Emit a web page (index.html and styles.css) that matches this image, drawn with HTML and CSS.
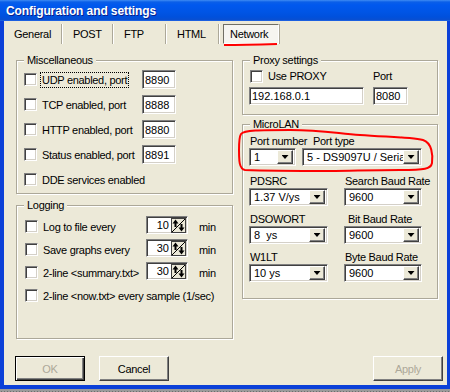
FILE: index.html
```html
<!DOCTYPE html>
<html lang="en">
  <head>
    <meta charset="UTF-8" />
    <meta name="viewport" content="width=device-width, initial-scale=1.0" />
    <title>Configuration and settings</title>
    <link rel="stylesheet" href="styles.css">
  </head>
  <body>
    <div class="window">
      <div class="titlebar">Configuration and settings</div>
      <div class="frame">
        <div class="tabs">
          <div class="tab">General</div>
          <div class="tab">POST</div>
          <div class="tab">FTP</div>
          <div class="tab">HTML</div>
          <div class="tab active">Network</div>
        </div>

        <div class="panel">
          <div class="column left">
            <fieldset class="group misc">
              <legend>Miscellaneous</legend>
              <div class="port-row">
                <input type="checkbox" class="check" />
                <span class="label"><span class="focus">UDP enabled, port</span></span>
                <input type="text" class="edit" value="8890" />
              </div>
              <div class="port-row">
                <input type="checkbox" class="check" />
                <span class="label">TCP enabled, port</span>
                <input type="text" class="edit" value="8888" />
              </div>
              <div class="port-row">
                <input type="checkbox" class="check" />
                <span class="label">HTTP enabled, port</span>
                <input type="text" class="edit" value="8880" />
              </div>
              <div class="port-row">
                <input type="checkbox" class="check" />
                <span class="label">Status enabled, port</span>
                <input type="text" class="edit" value="8891" />
              </div>
              <div class="port-row">
                <input type="checkbox" class="check" />
                <span class="label">DDE services enabled</span>
              </div>
            </fieldset>

            <fieldset class="group logging">
              <legend>Logging</legend>
              <div class="log-row">
                <input type="checkbox" class="check" />
                <span class="label">Log to file every</span>
                <span class="spin">
                  <span class="value">10</span>
                  <svg class="updown" width="15" height="15" viewBox="0 0 15 15">
                    <rect x="0.5" y="0.5" width="14" height="14" fill="#ece9d8" stroke="#404040" />
                    <line x1="14" y1="1" x2="1" y2="14" stroke="#000" />
                    <path d="M4.5 1.5 L1.5 5.5 H3.5 V9 H5.5 V5.5 H7.5 Z" fill="#000" />
                    <path d="M10.5 13.5 L7.5 9.5 H9.5 V6 H11.5 V9.5 H13.5 Z" fill="#000" />
                  </svg>
                </span>
                <span class="unit">min</span>
              </div>
              <div class="log-row">
                <input type="checkbox" class="check" />
                <span class="label">Save graphs every</span>
                <span class="spin">
                  <span class="value">30</span>
                  <svg class="updown" width="15" height="15" viewBox="0 0 15 15">
                    <rect x="0.5" y="0.5" width="14" height="14" fill="#ece9d8" stroke="#404040" />
                    <line x1="14" y1="1" x2="1" y2="14" stroke="#000" />
                    <path d="M4.5 1.5 L1.5 5.5 H3.5 V9 H5.5 V5.5 H7.5 Z" fill="#000" />
                    <path d="M10.5 13.5 L7.5 9.5 H9.5 V6 H11.5 V9.5 H13.5 Z" fill="#000" />
                  </svg>
                </span>
                <span class="unit">min</span>
              </div>
              <div class="log-row">
                <input type="checkbox" class="check" />
                <span class="label">2-line &lt;summary.txt&gt;</span>
                <span class="spin">
                  <span class="value">30</span>
                  <svg class="updown" width="15" height="15" viewBox="0 0 15 15">
                    <rect x="0.5" y="0.5" width="14" height="14" fill="#ece9d8" stroke="#404040" />
                    <line x1="14" y1="1" x2="1" y2="14" stroke="#000" />
                    <path d="M4.5 1.5 L1.5 5.5 H3.5 V9 H5.5 V5.5 H7.5 Z" fill="#000" />
                    <path d="M10.5 13.5 L7.5 9.5 H9.5 V6 H11.5 V9.5 H13.5 Z" fill="#000" />
                  </svg>
                </span>
                <span class="unit">min</span>
              </div>
              <div class="log-row">
                <input type="checkbox" class="check" />
                <span class="label wide">2-line &lt;now.txt&gt; every sample (1/sec)</span>
              </div>
            </fieldset>
          </div>

          <div class="column right">
            <fieldset class="group proxy">
              <legend>Proxy settings</legend>
              <div class="proxy-grid">
                <label class="proxy-check">
                  <input type="checkbox" class="check" />
                  <span>Use PROXY</span>
                </label>
                <span class="proxy-port">Port</span>
                <input type="text" class="edit" value="192.168.0.1" />
                <input type="text" class="edit" value="8080" />
              </div>
            </fieldset>

            <fieldset class="group microlan">
              <legend>MicroLAN</legend>
              <div class="port-grid">
                <div class="field">
                  <span class="field-label">Port number</span>
                  <div class="combo"><span class="text">1</span><span class="drop"></span></div>
                </div>
                <div class="field">
                  <span class="field-label indent">Port type</span>
                  <div class="combo"><span class="text">5 - DS9097U / Serial</span><span class="drop"></span></div>
                </div>
              </div>
              <div class="param-grid">
                <div class="field">
                  <span class="field-label">PDSRC</span>
                  <div class="combo"><span class="text">1.37 V/ys</span><span class="drop"></span></div>
                </div>
                <div class="field">
                  <span class="field-label">Search Baud Rate</span>
                  <div class="combo"><span class="text">9600</span><span class="drop"></span></div>
                </div>
                <div class="field">
                  <span class="field-label">DSOWORT</span>
                  <div class="combo"><span class="text">8&nbsp; ys</span><span class="drop"></span></div>
                </div>
                <div class="field">
                  <span class="field-label nudge">Bit Baud Rate</span>
                  <div class="combo"><span class="text">9600</span><span class="drop"></span></div>
                </div>
                <div class="field">
                  <span class="field-label">W1LT</span>
                  <div class="combo"><span class="text">10 ys</span><span class="drop"></span></div>
                </div>
                <div class="field">
                  <span class="field-label">Byte Baud Rate</span>
                  <div class="combo"><span class="text">9600</span><span class="drop"></span></div>
                </div>
              </div>
            </fieldset>
          </div>
        </div>

        <div class="buttons">
          <button class="default" disabled>OK</button>
          <button class="cancel">Cancel</button>
          <button class="apply" disabled>Apply</button>
        </div>
      </div>

      <!-- red hand-drawn marks on top of the dialog -->
      <svg class="marks" width="450" height="389" viewBox="0 0 450 389">
        <path d="M224 45 C240 45 260 44.5 277 44" fill="none" stroke="#f00" stroke-width="2" />
        <path d="M241 134 C244 130 260 130 290 130 C320 130 335 133 360 135 C385 137 410 137 423 140 C432 143 433 155 432 163 C431 169 425 170 400 170 C370 170 350 171 330 171 C300 171 270 171 245 170 C239 169 239 160 239 150 C239 142 239 137 241 134 Z" fill="none" stroke="#f00" stroke-width="2" />
      </svg>
    </div>
  </body>
</html>
```

FILE: styles.css
```css
body {
  margin: 0;
  font-family: "Liberation Sans", Arial, sans-serif;
  font-size: 11px;
  letter-spacing: -0.3px;
  color: #000;
  background-color: #9a9a9a;
  background-image: radial-gradient(circle, #6e6e6e 0.7px, transparent 0.9px);
  background-size: 3px 3px;
}
.window {
  position: relative;
  width: 450px;
  height: 389px;
}
.titlebar {
  height: 21px;
  box-sizing: border-box;
  padding: 2px 0 0 6px;
  line-height: 19px;
  font-size: 12px;
  font-weight: bold;
  letter-spacing: -0.1px;
  color: #fff;
  text-shadow: 1px 1px 0 #0a1e8c;
  background: linear-gradient(to bottom, #3f8cf3 0, #0a5fe8 2px, #0058ee 5px, #0055e5 12px, #0050dc 17px, #0a4fd0 20px, #2a6ff0 21px);
}
.frame {
  height: 368px;
  box-sizing: border-box;
  border-left: 4px solid #0b40d8;
  border-right: 3px solid #0b40d8;
  border-bottom: 4px solid #0b40d8;
  background-color: #ece9d8;
}

/* tab strip */
.tabs {
  display: flex;
  height: 24px;
  box-sizing: border-box;
  padding-top: 3px;
}
.tab {
  height: 20px;
  box-sizing: border-box;
  padding: 4px 0 0 11px;
  line-height: 13px;
  border-right: 1px solid #aca899;
  box-shadow: 1px 0 0 #fff;
}
.tab:nth-child(1) {
  width: 58px;
  padding-left: 10px;
}
.tab:nth-child(2) {
  width: 51px;
}
.tab:nth-child(3),
.tab:nth-child(4) {
  width: 53px;
}
.tab.active {
  width: 56px;
  margin-left: 4px;
  padding: 3px 0 0 6px;
  border: 1px solid;
  border-color: #716f64 #fff #fff #716f64;
  background-color: #f6f5f0;
  box-shadow: 1px 0 0 #aca899;
}

/* page body */
.panel {
  display: flex;
  gap: 9px;
  padding: 9px 0 0 12px;
}
.column {
  display: flex;
  flex-direction: column;
}
.column.left {
  width: 217px;
  gap: 5px;
}
.column.right {
  width: 196px;
  gap: 3px;
}
.group {
  margin: 0;
  min-width: 0;
  box-sizing: border-box;
  border: 1px solid #aca899;
  box-shadow: inset 1px 1px 0 #fff, 1px 1px 0 #fff;
}
.group legend {
  padding: 0 3px;
  line-height: 13px;
  background-color: #ece9d8;
}
.misc,
.logging {
  height: 140px;
  padding: 0 7px;
}
.misc {
  padding-top: 3px;
}
.logging {
  padding-top: 4px;
}
.proxy {
  height: 61px;
  padding: 0 6px;
}
.microlan {
  height: 181px;
  padding: 4px 6px 0;
}
.proxy legend,
.microlan legend {
  margin-left: 1px;
}

/* classic sunken controls */
.check,
.edit,
.spin,
.combo {
  box-sizing: border-box;
  border: 1px solid;
  border-color: #808080 #fff #fff #808080;
  box-shadow: inset 1px 1px 0 #404040, inset -1px -1px 0 #d4d0c8;
  background-color: #fff;
}
.edit,
.spin,
.combo {
  letter-spacing: 0;
}
.check {
  appearance: none;
  flex: none;
  width: 13px;
  height: 13px;
  margin: 0 5px 0 0;
}
.edit {
  width: 34px;
  height: 19px;
  margin: 0;
  padding: 0 2px;
  font: inherit;
  color: #000;
  outline: none;
}

.port-row {
  display: flex;
  align-items: center;
  height: 19px;
}
.port-row + .port-row {
  margin-top: 6px;
}
.port-row .label {
  width: 100px;
  white-space: nowrap;
}
.focus {
  outline: 1px dotted #000;
  outline-offset: 1px;
}

.log-row {
  display: flex;
  align-items: flex-end;
  height: 18px;
}
.log-row + .log-row {
  margin-top: 5px;
}
.log-row .check {
  margin: 0 5px 1px 1px;
}
.log-row .label {
  width: 103px;
  line-height: 13px;
  white-space: nowrap;
}
.log-row .label.wide {
  width: auto;
}
.spin {
  display: flex;
  align-items: center;
  justify-content: flex-end;
  width: 42px;
  height: 18px;
  padding-right: 1px;
}
.spin .value {
  margin-right: 2px;
}
.updown {
  display: block;
}
.unit {
  margin-left: 11px;
  line-height: 13px;
}

/* proxy */
.proxy-grid {
  display: grid;
  grid-template-columns: 115px 35px;
  grid-template-rows: 20px 18px;
  column-gap: 9px;
}
.proxy-grid .edit {
  width: auto;
  height: 18px;
}
.proxy-check {
  display: flex;
  align-items: center;
  align-self: start;
  padding: 3px 0 0 1px;
  line-height: 13px;
}
.proxy-port {
  padding-top: 3px;
  line-height: 13px;
}

/* microlan */
.port-grid {
  display: grid;
  grid-template-columns: 47px 120px;
  column-gap: 6px;
}
.param-grid {
  display: grid;
  grid-template-columns: 79px 78px;
  column-gap: 16px;
  row-gap: 7px;
  margin-top: 9px;
}
.field {
  display: flex;
  flex-direction: column;
}
.field-label {
  line-height: 13px;
  white-space: nowrap;
  margin-left: 1px;
}
.field-label.indent {
  margin-left: 11px;
}
.field-label.nudge {
  margin-left: 4px;
}
.combo {
  display: flex;
  align-items: center;
  height: 18px;
  padding: 0 2px 0 4px;
}
.combo .text {
  flex: 1;
  min-width: 0;
  overflow: hidden;
  white-space: nowrap;
}
.drop {
  display: flex;
  align-items: center;
  justify-content: center;
  flex: none;
  width: 16px;
  height: 14px;
  box-sizing: border-box;
  border: 1px solid;
  border-color: #fff #404040 #404040 #fff;
  box-shadow: inset -1px -1px 0 #808080;
  background-color: #ece9d8;
}
.drop::after {
  content: "";
  width: 7px;
  height: 4px;
  background-color: #000;
  clip-path: polygon(0 0, 100% 0, 50% 100%);
}

/* dialog buttons */
.buttons {
  display: flex;
  margin-top: 17px;
  padding: 0 4px 0 11px;
}
.buttons button {
  width: 70px;
  height: 25px;
  box-sizing: border-box;
  font: inherit;
  letter-spacing: inherit;
  color: #000;
  border: 1px solid;
  border-color: #fff #404040 #404040 #fff;
  box-shadow: inset -1px -1px 0 #808080;
  background-color: #ece9d8;
}
.buttons button:disabled {
  color: #aca899;
}
.buttons .default {
  border-color: #000;
  box-shadow: inset 1px 1px 0 #fff, inset -1px -1px 0 #404040, inset -2px -2px 0 #808080;
}
.buttons .cancel {
  margin-left: 14px;
}
.buttons .apply {
  margin-left: auto;
}

.marks {
  position: absolute;
  left: 0;
  top: 0;
  pointer-events: none;
}
```
